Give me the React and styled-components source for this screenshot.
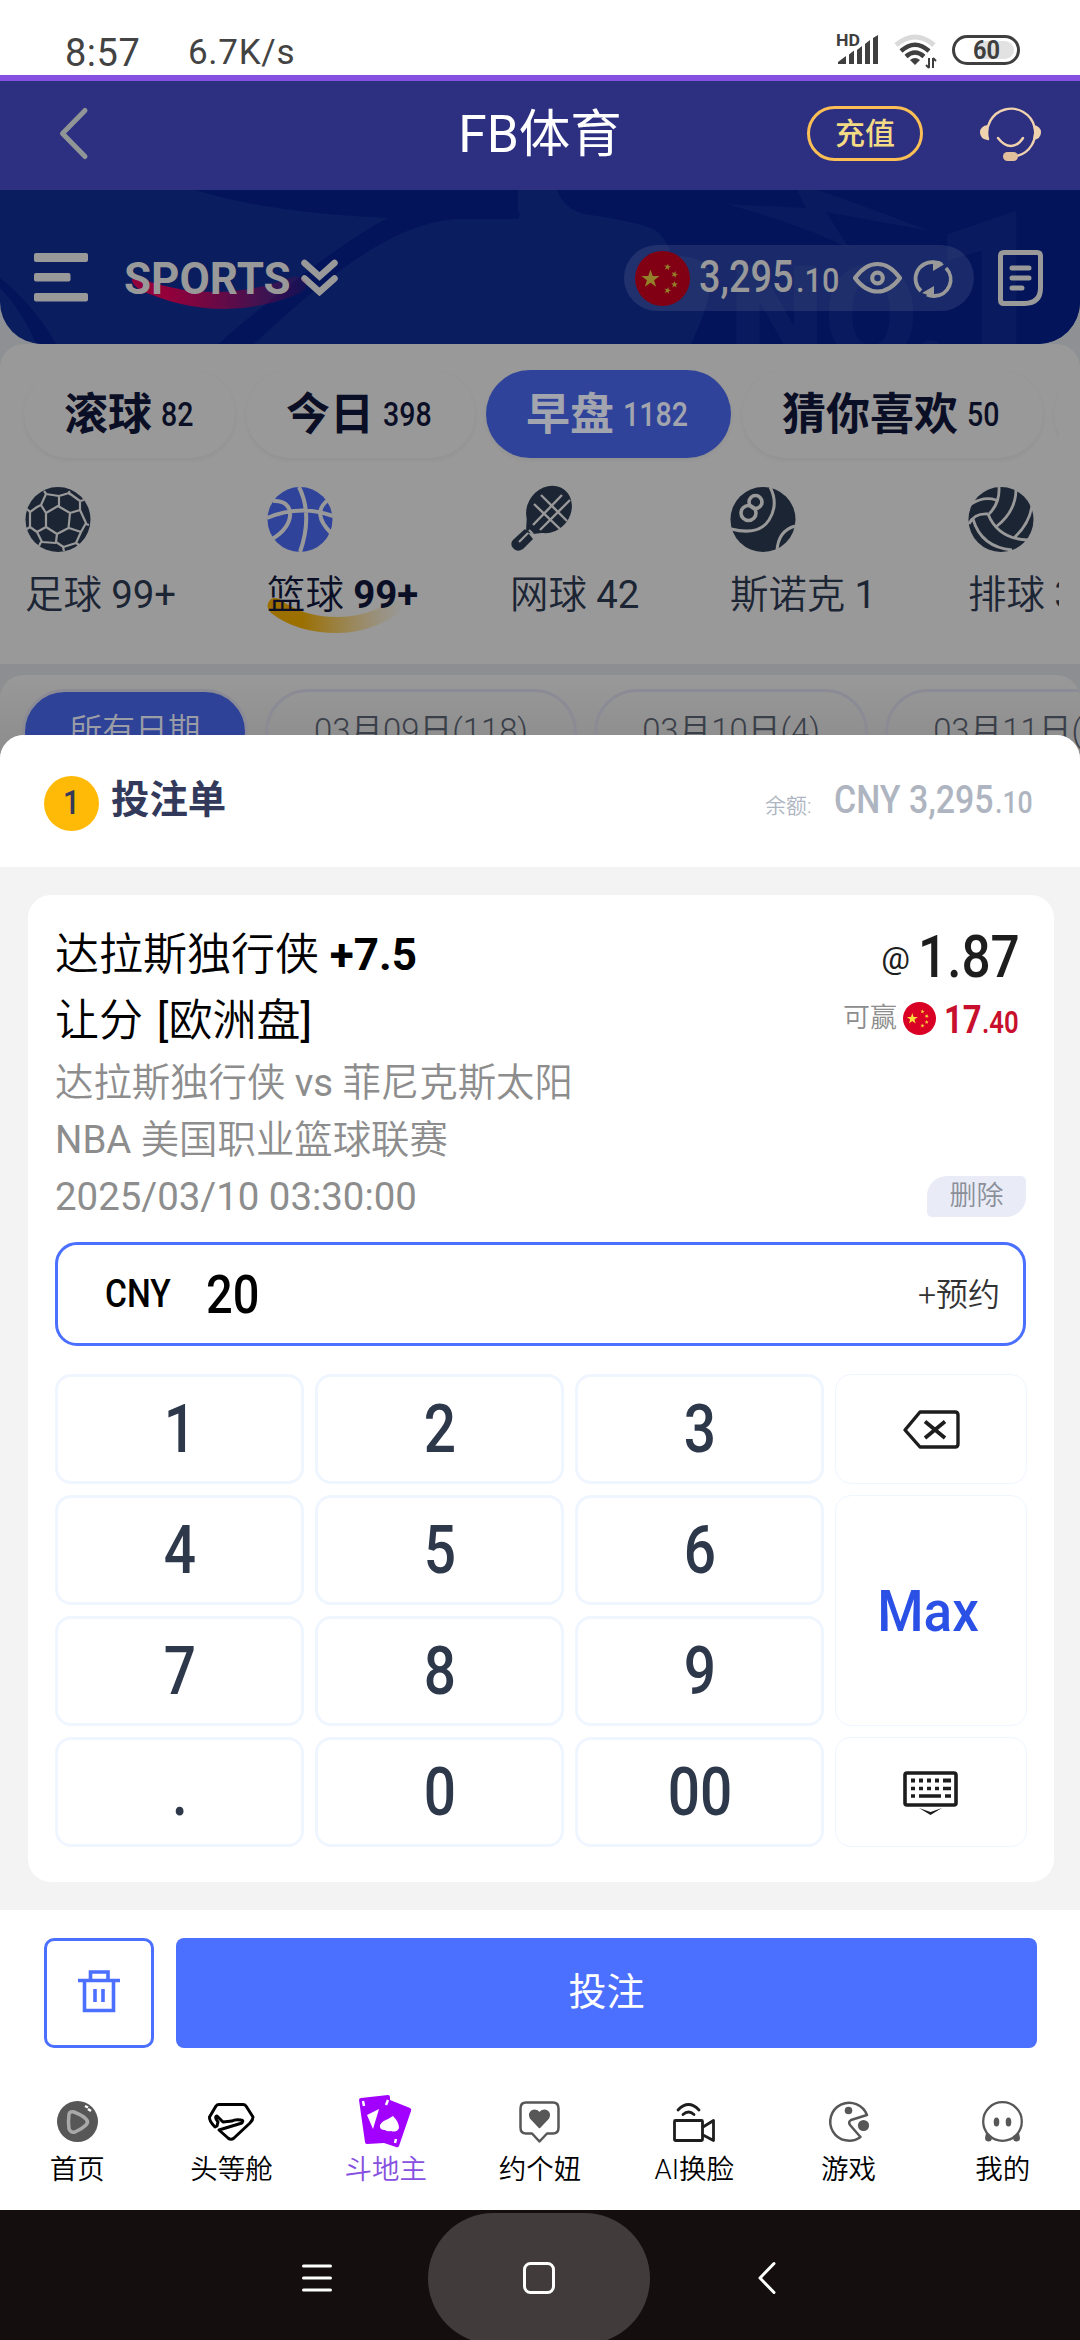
import React from "react";
import styled, { createGlobalStyle } from "styled-components";

const Global = createGlobalStyle`
  * { box-sizing: border-box; }
  body { margin: 0; background: #fff; }
  svg { display: block; flex: none; overflow: visible; }
`;

const Screen = styled.div`
  width: 1080px;
  height: 2340px;
  overflow: hidden;
  display: flex;
  flex-direction: column;
  background: #fff;
  font-family: Roboto, "Noto Sans CJK SC", sans-serif;
  font-weight: 400;
`;

/* Narrow numerals: laid out at $w, drawn squeezed by $k. */
const Din = styled.span`
  display: inline-block;
  flex: none;
  width: ${(p) => p.$w}px;
  font-size: ${(p) => p.$s}px;
  font-weight: ${(p) => p.$b || 500};
  line-height: 1;
  white-space: nowrap;
  transform: scaleX(${(p) => p.$k || 0.88});
  transform-origin: left center;
`;

/* ---------- status bar ---------- */
const StatusBar = styled.div`
  height: 81px;
  flex: none;
  border-bottom: 6px solid #8650e0;
  display: flex;
  align-items: flex-start;
  padding: 0 58px 0 65px;
  color: #434343;
`;
const Clock = styled.span`
  width: 123px;
  padding-top: 31px;
  font-size: 38px;
  line-height: 44px;
  letter-spacing: 0.5px;
`;
const Speed = styled.span`
  flex: 1;
  padding-top: 31px;
  font-size: 35px;
  line-height: 43px;
  letter-spacing: 0.7px;
`;
const StatusIcons = styled.div`
  padding-top: 33px;
`;

/* ---------- app header ---------- */
const Header = styled.div`
  height: 109px;
  flex: none;
  background: #2d2f80;
  display: grid;
  grid-template-columns: 1fr auto 1fr;
  align-items: center;
  padding: 0 39px 5px;
`;
const BackIcon = styled.svg`
  margin-left: 19px;
`;
const Title = styled.div`
  color: #fff;
  font-size: 51.5px;
  line-height: 60px;
  padding-top: 3px;
`;
const HeaderActions = styled.div`
  display: flex;
  justify-content: flex-end;
  align-items: center;
  gap: 57px;
`;
const Recharge = styled.div`
  width: 116px;
  height: 55px;
  border: 3px solid #fbbf55;
  border-radius: 28px;
  color: #f3da85;
  font-size: 30px;
  font-weight: 500;
  line-height: 49px;
  text-align: center;
`;

/* ---------- dimmed page ---------- */
const Page = styled.div`
  height: 570px;
  flex: none;
  overflow: hidden;
  background: linear-gradient(#8f9296, #8c8e90);
`;
const Banner = styled.div`
  height: 154px;
  position: relative;
  overflow: hidden;
  background: #0a1d5f;
  border-radius: 0 0 42px 42px;
`;
const BannerArt = styled.svg`
  position: absolute;
  inset: 0;
`;
const BannerRow = styled.div`
  position: relative;
  display: flex;
  align-items: center;
  height: 154px;
  padding: 22px 37px 0 34px;
  color: #999;
`;
const SportsMenu = styled.div`
  margin-left: 36px;
  position: relative;
  display: flex;
  align-items: center;
  flex: 1;
`;
const SportsText = styled.span`
  position: relative;
  width: 177px;
  font-size: 44px;
  font-weight: 700;
  line-height: 48px;
  padding-top: 1px;
`;
const Swoosh = styled.svg`
  position: absolute;
  left: ${(p) => p.$x}px;
  top: ${(p) => p.$y}px;
`;
const Wallet = styled.div`
  width: 350px;
  height: 66px;
  border-radius: 33px;
  background: rgba(255, 255, 255, 0.09);
  display: flex;
  align-items: center;
  padding-left: 11px;
  margin-right: 24px;
`;
const Amount = styled.div`
  display: flex;
  align-items: baseline;
`;
const WalletAmount = styled(Amount)`
  margin: -2px 0 0 9px;
`;

const Panel = styled.div`
  background: #999;
  border-radius: 24px 24px 0 0;
  overflow: hidden;
`;
const MarketPanel = styled(Panel)`
  height: 320px;
`;
const Strip = styled.div`
  display: flex;
  width: ${(p) => p.$w}px;
  overflow: hidden;
`;
const PeriodStrip = styled(Strip)`
  gap: 11px;
  padding: 26px 0 12px 24px;
`;
const Period = styled.div`
  flex: none;
  width: ${(p) => p.$w}px;
  height: 88px;
  border-radius: 44px;
  padding: 2px 0 0 40px;
  display: flex;
  align-items: center;
  white-space: nowrap;
  font-size: 44px;
  line-height: 60px;
  font-weight: 700;
  color: ${(p) => (p.$on ? "#a3a5ae" : "#0b0f26")};
  background: ${(p) => (p.$on ? "#2f439b" : "#999")};
  box-shadow: 0 2px 4px rgba(0, 0, 0, 0.05);
`;
const Count = styled(Din)`
  margin: -3px 0 0 9px;
`;
const SportStrip = styled(Strip)`
  padding: 17px 0 50px 25px;
`;
const Sport = styled.div`
  flex: none;
  position: relative;
  width: ${(p) => p.$w}px;
  color: ${(p) => (p.$on ? "#0b0f26" : "#1c2534")};
`;
const SportLabel = styled.div`
  position: relative;
  margin-top: 15px;
  font-size: 38.4px;
  line-height: 56px;
  white-space: nowrap;
  font-weight: 350;
  b { font-weight: 700; }
  span { font-weight: 400; }
`;
const DatePanel = styled(Panel)`
  margin-top: 11px;
  height: 100px;
  background: linear-gradient(#999, #8f8f8f 60%);
`;
const DateStrip = styled(Strip)`
  gap: 17px;
  padding: 14px 0 0 22px;
`;
const DateChip = styled.div`
  flex: none;
  width: ${(p) => p.$w}px;
  height: 86px;
  border: 3px solid #8b8b95;
  border-radius: 43px;
  background: ${(p) => (p.$on ? "#2e4298" : "transparent")};
  color: ${(p) => (p.$on ? "#9a9ca6" : "#3a3f49")};
  font-size: 32.8px;
  font-weight: 350;
  line-height: 79px;
  text-align: center;
  white-space: nowrap;
`;

/* ---------- bet slip sheet ---------- */
const Sheet = styled.div`
  position: relative;
  flex: none;
  margin-top: -25px;
  height: 1475px;
  background: #f3f3f3;
  border-radius: 24px 24px 0 0;
  overflow: hidden;
`;
const SheetHead = styled.div`
  height: 132px;
  background: #fff;
  display: flex;
  align-items: center;
  padding: 4px 49px 0 44px;
`;
const Badge = styled.div`
  width: 55px;
  height: 55px;
  border-radius: 50%;
  background: #ffba08;
  color: #333a5a;
  display: flex;
  align-items: center;
  justify-content: center;
  padding-bottom: 2px;
`;
const SheetTitle = styled.div`
  flex: 1;
  margin-left: 12px;
  color: #32395a;
  font-size: 38.4px;
  line-height: 56px;
  font-weight: 700;
  padding-bottom: 6px;
`;
const Balance = styled.div`
  display: flex;
  align-items: baseline;
  color: #aeb5c1;
  padding-bottom: 5px;
  small {
    font-size: 21px;
    font-weight: 350;
    width: 69px;
  }
`;
const BetCard = styled.div`
  margin: 28px 26px 0 28px;
  height: 987px;
  border-radius: 23px;
  background: #fff;
  padding: 27px 28px 0 27px;
`;
const BetTop = styled.div`
  display: flex;
  height: 320px;
`;
const BetInfo = styled.div`
  flex: 1;
`;
const PickLine = styled.div`
  font-size: 44px;
  line-height: 66px;
  color: #000;
  font-weight: 350;
  b { font-weight: 700; }
`;
const Bracket = styled.span`
  font-weight: 400;
  margin-left: ${(p) => p.$gap || 0}px;
`;
const MetaLine = styled.div`
  font-size: 38.4px;
  line-height: 57px;
  color: #8d8d8d;
  font-weight: 350;
  span { font-weight: 400; }
`;
const BetSide = styled.div`
  display: flex;
  flex-direction: column;
  align-items: flex-end;
`;
const Odds = styled.div`
  display: flex;
  align-items: center;
  height: 76px;
  padding: 0 12px 8px 0;
  color: #1d1d1d;
  gap: 8px;
`;
const At = styled.span`
  font-size: 32px;
  line-height: 40px;
  padding-top: 3px;
`;
const Win = styled.div`
  display: flex;
  align-items: center;
  height: 40px;
  padding-right: 7px;
  color: #8d8d8d;
  font-size: 27px;
  font-weight: 350;
  line-height: 40px;
  gap: 6px;
`;
const WinValue = styled(Amount)`
  color: #c8102e;
  padding: 4px 0 0 2px;
`;
const Remove = styled.div`
  margin-top: auto;
  margin-bottom: 25px;
  width: 99px;
  height: 41px;
  border-radius: 20px 5px 20px 5px;
  background: #e9ecf6;
  color: #8b8f99;
  font-size: 27px;
  font-weight: 350;
  line-height: 41px;
  text-align: center;
`;
const Stake = styled.div`
  height: 104px;
  border: 3px solid #4b6fff;
  border-radius: 22px;
  display: flex;
  align-items: center;
  padding: 1px 23px 0 47px;
  color: #000;
`;
const Reserve = styled.div`
  margin-left: auto;
  font-size: 32px;
  line-height: 46px;
  font-weight: 350;
  color: #333;
`;
const Keypad = styled.div`
  margin-top: 28px;
  display: grid;
  grid-template-columns: 249px 249px 249px 192px;
  grid-template-rows: repeat(4, 110px);
  gap: 11px;
`;
const Key = styled.div`
  grid-area: ${(p) => p.$area};
  border: ${(p) => (p.$thin ? 1 : 3)}px solid #eff6ff;
  border-radius: 16px;
  display: flex;
  align-items: center;
  justify-content: center;
  padding-top: 2px;
  color: #2e384b;
  span { transform-origin: center; text-align: center; }
`;
const MaxText = styled(Din)`
  color: #2b50e6;
  margin-right: 6px;
`;

/* ---------- footer ---------- */
const Actions = styled.div`
  height: 166px;
  flex: none;
  display: flex;
  gap: 22px;
  padding: 28px 43px 0 44px;
  background: #fff;
  margin-top: 28px;
`;
const TrashButton = styled.div`
  width: 110px;
  height: 110px;
  border: 3px solid #4b6fff;
  border-radius: 10px;
  display: flex;
  align-items: center;
  justify-content: center;
  padding-bottom: 4px;
`;
const Submit = styled.div`
  flex: 1;
  height: 110px;
  border-radius: 8px;
  background: #4b6fff;
  color: #fff;
  font-size: 38px;
  line-height: 108px;
  text-align: center;
`;
const TabBar = styled.div`
  height: 134px;
  background: #fff;
  display: grid;
  grid-template-columns: repeat(7, 1fr);
`;
const Tab = styled.div`
  display: flex;
  flex-direction: column;
  align-items: center;
  color: ${(p) => (p.$on ? "#8650e0" : "#000")};
  font-size: 27.5px;
  font-weight: 350;
  line-height: 44px;
`;
const TabIcon = styled.div`
  height: 72px;
  display: flex;
  align-items: center;
  justify-content: center;
  padding-top: 19px;
`;
const SystemNav = styled.div`
  height: 130px;
  flex: none;
  background: #140e0e;
  display: flex;
  align-items: flex-start;
  padding: 3px 0 0 302px;
  overflow: hidden;
`;
const HomeKey = styled.div`
  width: 222px;
  height: 131px;
  flex: none;
  border-radius: 66px;
  background: #413b3b;
  margin: 0 108px 0 96px;
  display: flex;
  justify-content: center;
  padding-top: 49px;
`;
const NavIcon = styled.div`
  padding-top: ${(p) => p.$top}px;
`;

/* ---------- drawings ---------- */
const star = (cx, cy, r, rot = 0) =>
  Array.from({ length: 10 }, (_, i) => {
    const a = ((i * 36 - 90 + rot) * Math.PI) / 180;
    const q = i % 2 ? r * 0.4 : r;
    return `${(cx + q * Math.cos(a)).toFixed(2)},${(cy + q * Math.sin(a)).toFixed(2)}`;
  }).join(" ");

const Flag = ({ size, red, gold }) => (
  <svg width={size} height={size} viewBox="0 0 55 55">
    <circle cx="27.5" cy="27.5" r="27.5" fill={red} />
    <g fill={gold}>
      <polygon points={star(15.5, 28, 9.5)} />
      <polygon points={star(32.5, 16, 3.6, 10)} />
      <polygon points={star(39.5, 23.5, 3.6, 20)} />
      <polygon points={star(39.5, 33.5, 3.6)} />
      <polygon points={star(32.5, 39.5, 3.6, 15)} />
    </g>
  </svg>
);

const StatusGlyphs = () => (
  <svg width="185" height="38" viewBox="0 0 185 38" fill="#3f3f3f">
    <text x="-1" y="12.5" fontSize="16.5" fontWeight="700" fontFamily="Roboto" textLength="24" lengthAdjust="spacingAndGlyphs">HD</text>
    <path d="M1 31v-2l8-6v8zM12 31v-9.500l5-4V31zM20 31V17l5-4v18zM28 31V11l5-4v24zM36 31V5l5-3v29z" />
    <g transform="translate(58 2)" fill="none" strokeWidth="4.500">
      <path d="M1 10Q20 -6 39 10" stroke="#dadada" strokeWidth="5" />
      <path d="M6 16Q20 3.500 34 16" stroke="#3f3f3f" />
      <path d="M11 21.500Q20 13.500 29 21.500" stroke="#3f3f3f" />
      <path d="M20 30l-5-5q5-4 10 0z" fill="#3f3f3f" stroke="none" />
      <path d="M34 23v10m0 0l-3-3M38 33V23m0 0l3 3" stroke="#3f3f3f" strokeWidth="2" />
    </g>
    <rect x="116.500" y="3.500" width="65" height="27" rx="13.500" fill="#fff" stroke="#3f3f3f" strokeWidth="3" />
    <path d="M142 8h26a9 9 0 0 1 0 18h-26z" fill="#e2e2e2" />
    <text x="136" y="26" fontSize="25" fontWeight="700" fontFamily="Roboto" textLength="27" lengthAdjust="spacingAndGlyphs">60</text>
  </svg>
);

const Headset = () => (
  <svg width="61" height="55" viewBox="0 0 61 55" fill="none" stroke="#f0d2ae" strokeWidth="2.400" strokeLinecap="round">
    <path d="M8 33A24 24 0 1 1 37 50" />
    <path d="M18 32Q24 40 31 40T43 32" />
    <path d="M8 19q-8 1-8 7.500T8 34q-2-8 0-15zM53 19q8 1 8 7.500T53 34q2-8 0-15z" fill="#f0d2ae" stroke="none" />
    <rect x="23" y="46" width="15" height="9" rx="4.500" fill="#e2c09c" stroke="none" />
  </svg>
);

const Art = () => (
  <BannerArt width="1080" height="154" viewBox="0 0 1080 154">
    <g fill="#03145b">
      <path d="M195 0Q270 23 388 28Q330 58 218 154H254Q300 110 345 77Q405 33 455 29H518Q521 26 518 20V0z" />
      <path d="M557 0Q565 20 585 24Q640 32 655 40Q668 50 671 65Q708 66 711 85Q712 110 691 154H1080V0z" />
      <path d="M0 88Q34 115 56 154H36Q22 120 0 98z" />
    </g>
    <g fill="#091b5e">
      <path d="M797 0L806 18L726 14Q800 34 849 58L826 22Q880 32 930 41Q870 18 818 0z" />
      <g fontFamily="Roboto" fontWeight="900">
        <text x="729" y="172" fontSize="136" textLength="222" lengthAdjust="spacingAndGlyphs">NO.</text>
        <text x="930" y="172" fontSize="212">1</text>
      </g>
    </g>
  </BannerArt>
);

const Burger = () => (
  <svg width="54" height="50" viewBox="0 0 54 50" fill="#999">
    <rect y="0" width="54" height="9" rx="2" />
    <rect y="20" width="36.500" height="8.500" rx="2" />
    <rect y="40" width="54" height="8.500" rx="2" />
  </svg>
);

const Chevrons = () => (
  <svg width="37" height="38" viewBox="0 0 37 38" fill="none" stroke="#999" strokeWidth="6.500" strokeLinecap="round">
    <path d="M3.500 4l15 13.500L33.500 4M3.500 19.500l15 13.500L33.500 19.500" />
  </svg>
);

const WalletIcons = () => (
  <svg width="98" height="40" viewBox="0 0 98 40" fill="none" stroke="#999" strokeWidth="4.200">
    <path d="M2 20Q12 6 24.500 6T47 20Q37 33.500 24.500 33.500T2 20z" strokeLinejoin="round" />
    <circle cx="24.500" cy="20" r="5.300" />
    <path d="M68 33A16.500 16.500 0 0 1 82 4.500q4 0 7 2M93 10A16.500 16.500 0 0 1 81 38q-4 0-7-1.500" strokeWidth="3.800" />
    <path d="M80 2l11 4.500L80 13zM81 28v11l-12-4z" fill="#999" stroke="none" />
  </svg>
);

const SlipIcon = () => (
  <svg width="45" height="56" viewBox="0 0 45 56" fill="none" stroke="#999" strokeWidth="5" strokeLinecap="round">
    <path d="M6 2.500h33q3.500 0 3.500 3.500v32q0 15-16 15.500H6q-3.500 0-3.500-3.500V6Q2.500 2.500 6 2.500z" />
    <path d="M14 18h17M14 28h17M14 38h10" />
  </svg>
);

const DARK = "#1c2534";
const Football = () => (
  <svg width="66" height="65" viewBox="0 0 66 65" fill="none" stroke="#999" strokeWidth="2.200" strokeLinejoin="round">
    <circle cx="33" cy="32.500" r="32.500" fill={DARK} stroke="none" />
    <path d="M21 26l12-7 12 7-1.500 15L32 47l-11-7zM21 26l-5-8 5-11 13 2v10M34 9l10-3 11 8v9l-10 3M55 23l6 13-5 9-12-4M56 45l-5 11-12.500 4-7.500-5 1-8M31 56l-14-1-5-10 9-5M12 45l-7-5V25l7-5 4-2M19 4l3 4M44 4l1 4M55 14l4-1M61 37l3 1M51 56l3 2M38 60l1 4M16 55l-2 4M5 40l-3 2M5 25l-3-3" />
  </svg>
);
const Basketball = () => (
  <svg width="66" height="65" viewBox="0 0 66 65" fill="none" stroke="#999" strokeWidth="4">
    <circle cx="33" cy="32.500" r="32.500" fill="#2f439b" stroke="none" />
    <path d="M32 0Q46 28 33 65M0 31Q33 17 66 29M6 14C28 12 30 38 5 52M61 13Q44 26 64 46" />
  </svg>
);
const Tennis = () => (
  <svg width="65" height="65" viewBox="0 0 65 65" fill="none" stroke="#999">
    <ellipse cx="39" cy="22.500" rx="21.500" ry="25" transform="rotate(38 39 22.500)" fill={DARK} stroke="none" />
    <path d="M17 26l-1 19 7 2 17-2z" fill={DARK} stroke="none" />
    <path d="M15 42l-11 10q-5 4-1 9t10 1l10-10z" fill={DARK} stroke="none" />
    <path d="M23 38l29-30M30 43l30-30M24 17l26 25M31 8l26 26" strokeWidth="2.400" />
    <path d="M9 55l9-9M19 43l4 4" strokeWidth="2.200" />
  </svg>
);
const EightBall = () => (
  <svg width="66" height="65" viewBox="0 0 66 65" fill="none" stroke="#999" strokeWidth="3">
    <circle cx="33" cy="32.500" r="32.500" fill={DARK} stroke="none" />
    <path d="M40 0Q49 17 39 33T1 42M65 39Q48 44 47 64" />
    <circle cx="25.500" cy="15" r="6.500" strokeWidth="3.600" />
    <circle cx="18.500" cy="26" r="7.500" strokeWidth="3.600" />
  </svg>
);
const Volleyball = () => (
  <svg width="66" height="65" viewBox="0 0 66 65" fill="none" stroke="#999" strokeWidth="2.800">
    <circle cx="33" cy="32.500" r="32.500" fill={DARK} stroke="none" />
    <path d="M31 0Q32 16 21 27M48 2Q48 24 29 39M64 18Q62 36 46 51M3 17Q16 9 28 13M1 37Q6 26 20 27M20 27Q30 52 60 53M5 32Q13 60 44 63" />
  </svg>
);

const BackspaceIcon = () => (
  <svg width="57" height="40" viewBox="0 0 57 40" fill="none" stroke="#1d1d1d" strokeWidth="3.400" strokeLinejoin="round">
    <path d="M17 2h35q3 0 3 3v29q0 3-3 3H17L2 20z" />
    <path d="M22 11.500l20 16.500M42 11.500L22 28" strokeWidth="3.800" />
  </svg>
);
const KeyboardIcon = () => (
  <svg width="56" height="45" viewBox="0 0 56 45" fill="none" stroke="#1d1d1d">
    <rect x="2" y="2" width="51" height="32" rx="2" strokeWidth="3.600" />
    <path d="M8 9.500h40" strokeWidth="4" strokeDasharray="4 4 4 4 4 4 4 4 8 50" />
    <path d="M8 17.500h40" strokeWidth="3.500" strokeDasharray="4 4 4 4 4 4 4 4 8 50" />
    <path d="M8 25h4M16 25h22M42 25h6" strokeWidth="3.500" />
    <path d="M16 37l11.500 4L39 37l-11.500 7z" fill="#1d1d1d" stroke="none" />
  </svg>
);
const TrashIcon = () => (
  <svg width="42" height="43" viewBox="0 0 42 43" fill="none" stroke="#4b6fff" strokeWidth="3.600">
    <path d="M0 10.500h42M12.500 10V2h17.500v8M6.500 11v29.500h29V11M17 19v13M25 19v13" />
  </svg>
);

const tabs = [
  {
    label: "首页",
    icon: (
      <svg width="41" height="41" viewBox="0 0 41 41">
        <circle cx="20.500" cy="20.500" r="20.500" fill="#575757" />
        <path d="M12 13q1-3 5-2 8 3 12 7 3 3 0 6-4 4-11 7-4 1-6-3-1-7 0-15z" fill="none" stroke="#a9a9a9" strokeWidth="3.500" />
        <path d="M28 5l3 1.500M31 8l3 2" stroke="#fff" strokeWidth="2.500" />
      </svg>
    ),
  },
  {
    label: "头等舱",
    icon: (
      <svg width="46" height="38" viewBox="0 0 46 38" fill="none" stroke="#000" strokeWidth="3" strokeLinejoin="round">
        <path d="M7 24Q1 18 1.500 14L8 3q1-1.500 3-1.500h24q2 0 3 1.500l7 11q0 3-3 6L26 35q-3 2.500-6 0L11 27l23-7q2-3-1-3-6-1-9 1l-9 1-6-6q-3 1 1 6l-1 4z" />
      </svg>
    ),
  },
  {
    label: "斗地主",
    on: true,
    icon: (
      <svg width="53" height="53" viewBox="0 0 53 53">
        <path d="M2 3L29 0q2 0 2 3v2l20 8q2 1 1 3L40 51q-1 2-3 1l-12-4-17 1q-2 0-2-2L0 5q0-2 2-2z" fill="#a200ff" />
        <path d="M20 14L14 34 8 20zM34 21q6 6 6 12-2 5-8 3-4 1-6-1-6 0-5-5 2-4 8-6z" fill="#fff" />
        <path d="M4 6l1 5M29 5l-2 5M37 44l-1 4" stroke="#fff" strokeWidth="2.500" />
      </svg>
    ),
  },
  {
    label: "约个妞",
    icon: (
      <svg width="41" height="42" viewBox="0 0 41 42" fill="none" stroke="#575757" strokeWidth="2.500" strokeLinejoin="round">
        <path d="M7 1.500h27q5.500 0 5.500 6v19q0 6-5.500 6h-6l-7.500 8-7.500-8H7q-5.500 0-5.500-6v-19q0-6 5.500-6z" />
        <path d="M20.500 26L12 17q-2-4 1-6.500 4-2 7.500 2 3.500-4 7.500-2 3 2.500 1 6.500z" fill="#575757" />
      </svg>
    ),
  },
  {
    label: "AI换脸",
    icon: (
      <svg width="42" height="40" viewBox="0 0 42 40" fill="none" stroke="#1d1d1d" strokeWidth="2.800" strokeLinejoin="round" strokeLinecap="round">
        <rect x="1.500" y="18.500" width="28" height="20" rx="1" />
        <path d="M30 25l10.500-6.500v20L30 33M5 8Q15.500-3 26 8M10 12.500q5.500-5 11 0" />
      </svg>
    ),
  },
  {
    label: "游戏",
    icon: (
      <svg width="41" height="41" viewBox="0 0 41 41" fill="none" stroke="#575757" strokeWidth="2.500" strokeLinejoin="round">
        <path d="M39 14A19 19 0 1 0 32.500 36L22 24q-2-3 1-5z" />
        <circle cx="20.500" cy="9.500" r="3.800" fill="#575757" stroke="none" />
        <circle cx="35.500" cy="24.500" r="5.600" fill="#575757" stroke="none" />
      </svg>
    ),
  },
  {
    label: "我的",
    icon: (
      <svg width="41" height="41" viewBox="0 0 41 41" fill="#575757">
        <path d="M4 32l6 6q-1 3-4 2.500T3 37zM37 32l-6 6q1 3 4 2.500T38 37z" />
        <circle cx="20.500" cy="20.500" r="19.300" fill="#fff" stroke="#575757" strokeWidth="2.300" />
        <ellipse cx="14.500" cy="21" rx="2.800" ry="4.500" />
        <ellipse cx="26.500" cy="21" rx="2.800" ry="4.500" />
      </svg>
    ),
  },
];

const periods = [
  { name: "滚球", count: "82", w: 211, cw: 32 },
  { name: "今日", count: "398", w: 229, cw: 48 },
  { name: "早盘", count: "1182", w: 245, cw: 62, on: true },
  { name: "猜你喜欢", count: "50", w: 301, cw: 32 },
  { name: "", count: "", w: 200, cw: 0 },
];

const sports = [
  { name: "足球", count: "99+", w: 242, Icon: Football },
  { name: "篮球", count: "99+", w: 243, Icon: Basketball, on: true },
  { name: "网球", count: "42", w: 220, Icon: Tennis },
  { name: "斯诺克", count: "1", w: 238, Icon: EightBall },
  { name: "排球", count: "38", w: 160, Icon: Volleyball },
];

const dates = [
  { label: "所有日期", w: 226, on: true },
  { label: "03月09日(118)", w: 312 },
  { label: "03月10日(4)", w: 274 },
  { label: "03月11日(6)", w: 274 },
];

const digits = ["1", "2", "3", "4", "5", "6", "7", "8", "9", ".", "0", "00"];

export default function App() {
  return (
    <Screen>
      <Global />
      <StatusBar>
        <Clock>8:57</Clock>
        <Speed>6.7K/s</Speed>
        <StatusIcons>
          <StatusGlyphs />
        </StatusIcons>
      </StatusBar>

      <Header>
        <BackIcon width="32" height="52" viewBox="0 0 32 52" fill="none" stroke="#909596" strokeWidth="5" strokeLinecap="round" strokeLinejoin="round">
          <path d="M27 3.500L4.500 26.500 27 49.500" />
        </BackIcon>
        <Title>FB体育</Title>
        <HeaderActions>
          <Recharge>充值</Recharge>
          <Headset />
        </HeaderActions>
      </Header>

      <Page>
        <Banner>
          <Art />
          <BannerRow>
            <Burger />
            <SportsMenu>
              <Swoosh $x={6} $y={22} width="178" height="34" viewBox="0 0 178 34">
                <defs>
                  <linearGradient id="red" x1="0" x2="1">
                    <stop offset="0.2" stopColor="#94003a" />
                    <stop offset="1" stopColor="#94003a" stopOpacity="0.12" />
                  </linearGradient>
                </defs>
                <path d="M4 1Q10-2 20 6Q90 28 160 2Q170-2 176 6Q178 14 168 18Q90 50 10 14Q-2 5 4 1z" fill="url(#red)" />
              </Swoosh>
              <SportsText>SPORTS</SportsText>
              <Chevrons />
            </SportsMenu>
            <Wallet>
              <Flag size={55} red="#820013" gold="#93802a" />
              <WalletAmount>
                <Din $s={44} $w={97} $k={0.86}>3,295</Din>
                <Din $s={34} $w={57} $k={0.9}>.10</Din>
              </WalletAmount>
              <WalletIcons />
            </Wallet>
            <SlipIcon />
          </BannerRow>
        </Banner>

        <MarketPanel>
          <PeriodStrip $w={1059}>
            {periods.map((p, i) => (
              <Period key={i} $w={p.w} $on={p.on}>
                {p.name}
                {p.count && (
                  <Count $s={34} $w={p.cw} $k={0.84}>{p.count}</Count>
                )}
              </Period>
            ))}
          </PeriodStrip>
          <SportStrip $w={1059}>
            {sports.map(({ name, count, w, Icon, on }) => (
              <Sport key={name} $w={w} $on={on}>
                <Icon />
                {on && (
                  <Swoosh $x={0} $y={111} width="138" height="35" viewBox="0 0 138 35">
                    <defs>
                      <linearGradient id="gold" x1="0" x2="1">
                        <stop offset="0.25" stopColor="#9b6f00" />
                        <stop offset="1" stopColor="#9b7f40" stopOpacity="0" />
                      </linearGradient>
                    </defs>
                    <path d="M4 1Q10-2 18 5Q40 19 70 19Q100 19 125 3Q136 0 138 6Q138 12 128 18Q100 35 70 35Q30 35 4 15Q-3 7 4 1z" fill="url(#gold)" />
                  </Swoosh>
                )}
                <SportLabel>
                  {name} {on ? <b>{count}</b> : <span>{count}</span>}
                </SportLabel>
              </Sport>
            ))}
          </SportStrip>
        </MarketPanel>

        <DatePanel>
          <DateStrip $w={1080}>
            {dates.map((d) => (
              <DateChip key={d.label} $w={d.w} $on={d.on}>{d.label}</DateChip>
            ))}
          </DateStrip>
        </DatePanel>
      </Page>

      <Sheet>
        <SheetHead>
          <Badge>
            <Din $s={33} $w={18} $k={0.9}>1</Din>
          </Badge>
          <SheetTitle>投注单</SheetTitle>
          <Balance>
            <small>余额:</small>
            <Din $s={39} $w={161} $k={0.87}>CNY 3,295</Din>
            <Din $s={31} $w={36} $k={0.86}>.10</Din>
          </Balance>
        </SheetHead>

        <BetCard>
          <BetTop>
            <BetInfo>
              <PickLine>达拉斯独行侠 <b>+7.5</b></PickLine>
              <PickLine>
                让分 <Bracket $gap={3}>[</Bracket>欧洲盘<Bracket>]</Bracket>
              </PickLine>
              <MetaLine>达拉斯独行侠 <span>vs</span> 菲尼克斯太阳</MetaLine>
              <MetaLine><span>NBA</span> 美国职业篮球联赛</MetaLine>
              <MetaLine><span>2025/03/10 03:30:00</span></MetaLine>
            </BetInfo>
            <BetSide>
              <Odds>
                <At>@</At>
                <Din $s={59} $w={96} $k={0.87}>1.87</Din>
              </Odds>
              <Win>
                可赢
                <Flag size={33} red="#da0025" gold="#ffdd3c" />
                <WinValue>
                  <Din $s={39} $w={38} $b={700} $k={0.84}>17</Din>
                  <Din $s={31} $w={37} $b={600} $k={0.83}>.40</Din>
                </WinValue>
              </Win>
              <Remove>删除</Remove>
            </BetSide>
          </BetTop>

          <Stake>
            <Din $s={39} $w={101} $k={0.86}>CNY</Din>
            <Din $s={54} $w={60} $k={0.87}>20</Din>
            <Reserve>+预约</Reserve>
          </Stake>

          <Keypad>
            {digits.map((d, i) => (
              <Key key={d} $area={`${Math.floor(i / 3) + 1} / ${(i % 3) + 1}`}>
                <Din $s={66} $w={76} $k={0.86}>{d}</Din>
              </Key>
            ))}
            <Key $thin $area="1 / 4"><BackspaceIcon /></Key>
            <Key $thin $area="2 / 4 / 4 / 5">
              <MaxText $s={57} $w={110} $k={0.93}>Max</MaxText>
            </Key>
            <Key $thin $area="4 / 4"><KeyboardIcon /></Key>
          </Keypad>
        </BetCard>

        <Actions>
          <TrashButton><TrashIcon /></TrashButton>
          <Submit>投注</Submit>
        </Actions>
        <TabBar>
          {tabs.map((t) => (
            <Tab key={t.label} $on={t.on}>
              <TabIcon>{t.icon}</TabIcon>
              {t.label}
            </Tab>
          ))}
        </TabBar>
      </Sheet>

      <SystemNav>
        <NavIcon $top={51}>
          <svg width="30" height="29" viewBox="0 0 30 29" stroke="#fff" strokeWidth="3" strokeLinecap="round">
            <path d="M1.500 2h27M1.500 14h27M1.500 26h27" />
          </svg>
        </NavIcon>
        <HomeKey>
          <svg width="32" height="32" viewBox="0 0 32 32" fill="none" stroke="#fff" strokeWidth="3">
            <rect x="1.500" y="1.500" width="29" height="29" rx="6" />
          </svg>
        </HomeKey>
        <NavIcon $top={49}>
          <svg width="18" height="32" viewBox="0 0 18 32" fill="none" stroke="#fff" strokeWidth="3" strokeLinecap="round" strokeLinejoin="round">
            <path d="M16 1.500L2 16l14 14.500" />
          </svg>
        </NavIcon>
      </SystemNav>
    </Screen>
  );
}
